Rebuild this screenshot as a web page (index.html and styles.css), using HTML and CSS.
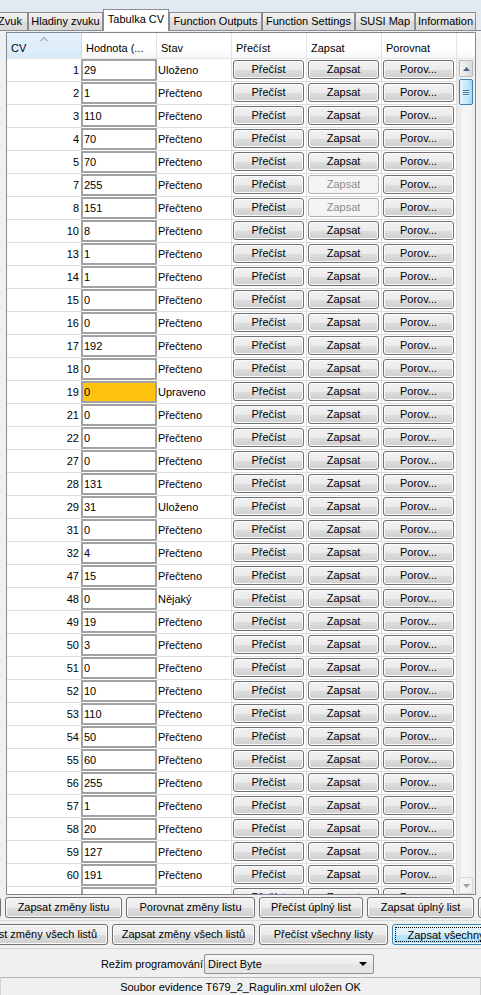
FILE: index.html
```html
<!DOCTYPE html>
<html lang="cs">
<head>
<meta charset="utf-8">
<title>Tabulka CV</title>
<link rel="stylesheet" href="styles.css">
</head>
<body>
<div class="tabbar">
  <div class="tab w-zvuk">Zvuk</div>
  <div class="tab w-hlad">Hladiny zvuku</div>
  <div class="tab sel w-tab">Tabulka CV</div>
  <div class="tab w-fo">Function Outputs</div>
  <div class="tab w-fs">Function Settings</div>
  <div class="tab w-susi">SUSI Map</div>
  <div class="tab w-info">Information</div>
</div>
<div class="pane">
  <div class="view">
    <div class="head">
      <div class="h sorted">CV<svg class="caret" width="8" height="6" viewBox="0 0 8 6"><polyline points="0.5,5 4,1.5 7.5,5" fill="none" stroke="#9aa9bd" stroke-width="1.2"/></svg></div>
      <div class="h">Hodnota (...</div>
      <div class="h">Stav</div>
      <div class="h">Přečíst</div>
      <div class="h">Zapsat</div>
      <div class="h">Porovnat</div>
      <div class="h hfill"></div>
    </div>
    <div class="bodywrap">
      <div class="rows">
        <div class="row"><div class="c cv">1</div><div class="c val">29</div><div class="c st">Uloženo</div><div class="c b"><span class="btn">Přečíst</span></div><div class="c b"><span class="btn">Zapsat</span></div><div class="c b"><span class="btn">Porov...</span></div></div>
        <div class="row"><div class="c cv">2</div><div class="c val">1</div><div class="c st">Přečteno</div><div class="c b"><span class="btn">Přečíst</span></div><div class="c b"><span class="btn">Zapsat</span></div><div class="c b"><span class="btn">Porov...</span></div></div>
        <div class="row"><div class="c cv">3</div><div class="c val">110</div><div class="c st">Přečteno</div><div class="c b"><span class="btn">Přečíst</span></div><div class="c b"><span class="btn">Zapsat</span></div><div class="c b"><span class="btn">Porov...</span></div></div>
        <div class="row"><div class="c cv">4</div><div class="c val">70</div><div class="c st">Přečteno</div><div class="c b"><span class="btn">Přečíst</span></div><div class="c b"><span class="btn">Zapsat</span></div><div class="c b"><span class="btn">Porov...</span></div></div>
        <div class="row"><div class="c cv">5</div><div class="c val">70</div><div class="c st">Přečteno</div><div class="c b"><span class="btn">Přečíst</span></div><div class="c b"><span class="btn">Zapsat</span></div><div class="c b"><span class="btn">Porov...</span></div></div>
        <div class="row"><div class="c cv">7</div><div class="c val">255</div><div class="c st">Přečteno</div><div class="c b"><span class="btn">Přečíst</span></div><div class="c b"><span class="btn dis">Zapsat</span></div><div class="c b"><span class="btn">Porov...</span></div></div>
        <div class="row"><div class="c cv">8</div><div class="c val">151</div><div class="c st">Přečteno</div><div class="c b"><span class="btn">Přečíst</span></div><div class="c b"><span class="btn dis">Zapsat</span></div><div class="c b"><span class="btn">Porov...</span></div></div>
        <div class="row"><div class="c cv">10</div><div class="c val">8</div><div class="c st">Přečteno</div><div class="c b"><span class="btn">Přečíst</span></div><div class="c b"><span class="btn">Zapsat</span></div><div class="c b"><span class="btn">Porov...</span></div></div>
        <div class="row"><div class="c cv">13</div><div class="c val">1</div><div class="c st">Přečteno</div><div class="c b"><span class="btn">Přečíst</span></div><div class="c b"><span class="btn">Zapsat</span></div><div class="c b"><span class="btn">Porov...</span></div></div>
        <div class="row"><div class="c cv">14</div><div class="c val">1</div><div class="c st">Přečteno</div><div class="c b"><span class="btn">Přečíst</span></div><div class="c b"><span class="btn">Zapsat</span></div><div class="c b"><span class="btn">Porov...</span></div></div>
        <div class="row"><div class="c cv">15</div><div class="c val">0</div><div class="c st">Přečteno</div><div class="c b"><span class="btn">Přečíst</span></div><div class="c b"><span class="btn">Zapsat</span></div><div class="c b"><span class="btn">Porov...</span></div></div>
        <div class="row"><div class="c cv">16</div><div class="c val">0</div><div class="c st">Přečteno</div><div class="c b"><span class="btn">Přečíst</span></div><div class="c b"><span class="btn">Zapsat</span></div><div class="c b"><span class="btn">Porov...</span></div></div>
        <div class="row"><div class="c cv">17</div><div class="c val">192</div><div class="c st">Přečteno</div><div class="c b"><span class="btn">Přečíst</span></div><div class="c b"><span class="btn">Zapsat</span></div><div class="c b"><span class="btn">Porov...</span></div></div>
        <div class="row"><div class="c cv">18</div><div class="c val">0</div><div class="c st">Přečteno</div><div class="c b"><span class="btn">Přečíst</span></div><div class="c b"><span class="btn">Zapsat</span></div><div class="c b"><span class="btn">Porov...</span></div></div>
        <div class="row"><div class="c cv">19</div><div class="c val mod">0</div><div class="c st">Upraveno</div><div class="c b"><span class="btn">Přečíst</span></div><div class="c b"><span class="btn">Zapsat</span></div><div class="c b"><span class="btn">Porov...</span></div></div>
        <div class="row"><div class="c cv">21</div><div class="c val">0</div><div class="c st">Přečteno</div><div class="c b"><span class="btn">Přečíst</span></div><div class="c b"><span class="btn">Zapsat</span></div><div class="c b"><span class="btn">Porov...</span></div></div>
        <div class="row"><div class="c cv">22</div><div class="c val">0</div><div class="c st">Přečteno</div><div class="c b"><span class="btn">Přečíst</span></div><div class="c b"><span class="btn">Zapsat</span></div><div class="c b"><span class="btn">Porov...</span></div></div>
        <div class="row"><div class="c cv">27</div><div class="c val">0</div><div class="c st">Přečteno</div><div class="c b"><span class="btn">Přečíst</span></div><div class="c b"><span class="btn">Zapsat</span></div><div class="c b"><span class="btn">Porov...</span></div></div>
        <div class="row"><div class="c cv">28</div><div class="c val">131</div><div class="c st">Přečteno</div><div class="c b"><span class="btn">Přečíst</span></div><div class="c b"><span class="btn">Zapsat</span></div><div class="c b"><span class="btn">Porov...</span></div></div>
        <div class="row"><div class="c cv">29</div><div class="c val">31</div><div class="c st">Uloženo</div><div class="c b"><span class="btn">Přečíst</span></div><div class="c b"><span class="btn">Zapsat</span></div><div class="c b"><span class="btn">Porov...</span></div></div>
        <div class="row"><div class="c cv">31</div><div class="c val">0</div><div class="c st">Přečteno</div><div class="c b"><span class="btn">Přečíst</span></div><div class="c b"><span class="btn">Zapsat</span></div><div class="c b"><span class="btn">Porov...</span></div></div>
        <div class="row"><div class="c cv">32</div><div class="c val">4</div><div class="c st">Přečteno</div><div class="c b"><span class="btn">Přečíst</span></div><div class="c b"><span class="btn">Zapsat</span></div><div class="c b"><span class="btn">Porov...</span></div></div>
        <div class="row"><div class="c cv">47</div><div class="c val">15</div><div class="c st">Přečteno</div><div class="c b"><span class="btn">Přečíst</span></div><div class="c b"><span class="btn">Zapsat</span></div><div class="c b"><span class="btn">Porov...</span></div></div>
        <div class="row"><div class="c cv">48</div><div class="c val">0</div><div class="c st">Nějaký</div><div class="c b"><span class="btn">Přečíst</span></div><div class="c b"><span class="btn">Zapsat</span></div><div class="c b"><span class="btn">Porov...</span></div></div>
        <div class="row"><div class="c cv">49</div><div class="c val">19</div><div class="c st">Přečteno</div><div class="c b"><span class="btn">Přečíst</span></div><div class="c b"><span class="btn">Zapsat</span></div><div class="c b"><span class="btn">Porov...</span></div></div>
        <div class="row"><div class="c cv">50</div><div class="c val">3</div><div class="c st">Přečteno</div><div class="c b"><span class="btn">Přečíst</span></div><div class="c b"><span class="btn">Zapsat</span></div><div class="c b"><span class="btn">Porov...</span></div></div>
        <div class="row"><div class="c cv">51</div><div class="c val">0</div><div class="c st">Přečteno</div><div class="c b"><span class="btn">Přečíst</span></div><div class="c b"><span class="btn">Zapsat</span></div><div class="c b"><span class="btn">Porov...</span></div></div>
        <div class="row"><div class="c cv">52</div><div class="c val">10</div><div class="c st">Přečteno</div><div class="c b"><span class="btn">Přečíst</span></div><div class="c b"><span class="btn">Zapsat</span></div><div class="c b"><span class="btn">Porov...</span></div></div>
        <div class="row"><div class="c cv">53</div><div class="c val">110</div><div class="c st">Přečteno</div><div class="c b"><span class="btn">Přečíst</span></div><div class="c b"><span class="btn">Zapsat</span></div><div class="c b"><span class="btn">Porov...</span></div></div>
        <div class="row"><div class="c cv">54</div><div class="c val">50</div><div class="c st">Přečteno</div><div class="c b"><span class="btn">Přečíst</span></div><div class="c b"><span class="btn">Zapsat</span></div><div class="c b"><span class="btn">Porov...</span></div></div>
        <div class="row"><div class="c cv">55</div><div class="c val">60</div><div class="c st">Přečteno</div><div class="c b"><span class="btn">Přečíst</span></div><div class="c b"><span class="btn">Zapsat</span></div><div class="c b"><span class="btn">Porov...</span></div></div>
        <div class="row"><div class="c cv">56</div><div class="c val">255</div><div class="c st">Přečteno</div><div class="c b"><span class="btn">Přečíst</span></div><div class="c b"><span class="btn">Zapsat</span></div><div class="c b"><span class="btn">Porov...</span></div></div>
        <div class="row"><div class="c cv">57</div><div class="c val">1</div><div class="c st">Přečteno</div><div class="c b"><span class="btn">Přečíst</span></div><div class="c b"><span class="btn">Zapsat</span></div><div class="c b"><span class="btn">Porov...</span></div></div>
        <div class="row"><div class="c cv">58</div><div class="c val">20</div><div class="c st">Přečteno</div><div class="c b"><span class="btn">Přečíst</span></div><div class="c b"><span class="btn">Zapsat</span></div><div class="c b"><span class="btn">Porov...</span></div></div>
        <div class="row"><div class="c cv">59</div><div class="c val">127</div><div class="c st">Přečteno</div><div class="c b"><span class="btn">Přečíst</span></div><div class="c b"><span class="btn">Zapsat</span></div><div class="c b"><span class="btn">Porov...</span></div></div>
        <div class="row"><div class="c cv">60</div><div class="c val">191</div><div class="c st">Přečteno</div><div class="c b"><span class="btn">Přečíst</span></div><div class="c b"><span class="btn">Zapsat</span></div><div class="c b"><span class="btn">Porov...</span></div></div>
        <div class="row"><div class="c cv">61</div><div class="c val">0</div><div class="c st">Uloženo</div><div class="c b"><span class="btn">Přečíst</span></div><div class="c b"><span class="btn">Zapsat</span></div><div class="c b"><span class="btn">Porov...</span></div></div>
      </div>
      <div class="sbar">
        <div class="sbtn up"><svg width="7" height="4" viewBox="0 0 7 4"><polygon points="0,4 3.5,0 7,4" fill="#4d6185"/></svg></div>
        <div class="thumb"><span class="grip"></span><span class="grip"></span><span class="grip"></span></div>
        <div class="track"></div>
        <div class="sbtn down"><svg width="7" height="4" viewBox="0 0 7 4"><polygon points="0,0 7,0 3.5,4" fill="#9aa1ab"/></svg></div>
      </div>
    </div>
  </div>
</div>
<div class="bottom">
  <div class="brow r1">
    <span class="pb w118">Přečíst změny listu</span>
    <span class="pb w117">Zapsat změny listu</span>
    <span class="pb w129">Porovnat změny listu</span>
    <span class="pb w104">Přečíst úplný list</span>
    <span class="pb w107">Zapsat úplný list</span>
    <span class="pb w110">Porovnat úplný list</span>
  </div>
  <div class="brow r2">
    <span class="pb w146">Přečíst změny všech listů</span>
    <span class="pb w143">Zapsat změny všech listů</span>
    <span class="pb w129">Přečíst všechny listy</span>
    <span class="pb w130 focus"><span class="frect">Zapsat všechny listy</span></span>
  </div>
  <div class="moderow">
    <span class="mlabel">Režim programování</span>
    <span class="combo"><span class="ctext">Direct Byte</span><svg width="8" height="4" viewBox="0 0 8 4"><polygon points="0,0 8,0 4,4" fill="#000"/></svg></span>
  </div>
  <div class="status">Soubor evidence T679_2_Ragulin.xml uložen OK</div>
</div>
</body>
</html>
```

FILE: styles.css
```css
html, body {
  margin: 0;
  padding: 0;
}
body {
  width: 481px;
  height: 995px;
  overflow: hidden;
  background: #f0f0f0;
  font-family: "Liberation Sans", Arial, sans-serif;
  font-size: 11px;
  color: #000;
}

/* ---------- tabs ---------- */
.tabbar {
  height: 30px;
  display: flex;
  align-items: flex-end;
  background: #e3e9f1;
  border-bottom: 1px solid #898c95;
  margin-left: -8px;
}
.tab {
  box-sizing: border-box;
  height: 18px;
  border: 1px solid #898c95;
  border-bottom: none;
  background: linear-gradient(#f3f3f3, #e6e6e6 50%, #dcdcdc 51%, #d9d9d9);
  text-align: center;
  line-height: 17px;
  white-space: nowrap;
  overflow: hidden;
}
.tab.sel {
  height: 22px;
  margin-bottom: -1px;
  background: #fff;
  line-height: 19px;
  position: relative;
}
.w-zvuk { width: 36px; }
.w-hlad { width: 75px; }
.w-tab { width: 66px; }
.w-fo { width: 93px; }
.w-fs { width: 93px; }
.w-susi { width: 60px; }
.w-info { width: 61px; }

/* ---------- table view ---------- */
.pane {
  padding: 1px 0 0 6px;
}
.view {
  width: 470px;
  box-sizing: border-box;
  border: 1px solid #828790;
  background: #fff;
}
.head {
  display: flex;
  height: 26px;
  box-sizing: border-box;
  border-bottom: 1px solid #e5e5e5;
  background: linear-gradient(#ffffff, #ffffff 60%, #f6f7f9);
}
.h {
  width: 75px;
  box-sizing: border-box;
  border-right: 1px solid #e3e4e6;
  padding: 7px 0 0 4px;
  line-height: 16px;
  white-space: nowrap;
  position: relative;
}
.h.sorted {
  background: linear-gradient(#e4f1fb, #d9ebf8);
  border-right-color: #c5dcec;
}
.h.hfill {
  flex: 1;
  border-right: none;
}
.caret {
  position: absolute;
  left: 33px;
  top: 3px;
}
.bodywrap {
  display: flex;
  height: 835px;
  overflow: hidden;
}
.rows {
  width: 450px;
}
.row {
  display: grid;
  grid-template-columns: repeat(6, 75px);
  height: 23px;
}
.c {
  box-sizing: border-box;
  height: 23px;
  border-right: 1px solid #dcdcdc;
  border-bottom: 1px solid #dcdcdc;
  line-height: 22px;
  white-space: nowrap;
  overflow: hidden;
}
.c.cv {
  text-align: right;
  padding-right: 2px;
}
.c.val {
  height: 22px;
  margin-left: -1px;
  width: 76px;
  border: 2px solid #a2a2a2;
  padding-left: 1px;
  line-height: 18px;
  background: #fff;
}
.c.val.mod {
  background: #ffc20e;
}
.c.st {
  padding-left: 1px;
}
.c.b {
  border-right: 1px solid #dcdcdc;
}
.btn {
  display: block;
  box-sizing: border-box;
  height: 19px;
  margin: 1px 2px 0 1px;
  border: 1px solid #707070;
  border-radius: 3px;
  background: linear-gradient(#f2f2f2, #ebebeb 50%, #dddddd 51%, #cfcfcf);
  box-shadow: inset 0 0 0 1px #fbfbfb;
  text-align: center;
  line-height: 17px;
}
.btn.dis {
  border-color: #adb2b5;
  background: #f4f4f4;
  box-shadow: none;
  color: #8d8d8d;
}

/* ---------- scrollbar ---------- */
.sbar {
  width: 18px;
  display: flex;
  flex-direction: column;
  background: linear-gradient(90deg, #e6e6e6, #f5f5f5 30%, #f5f5f5 70%, #eaeaea);
  border-left: 1px solid #ececec;
  box-sizing: border-box;
  padding: 1px 2px 0 1px;
}
.sbtn {
  height: 17px;
  box-sizing: border-box;
  border: 1px solid #b6b9bf;
  border-radius: 2px;
  background: linear-gradient(90deg, #f3f3f3, #e8e8e8 50%, #d9d9d9);
  display: flex;
  align-items: center;
  justify-content: center;
}
.sbtn.down {
  border-color: #d4d6d9;
  background: linear-gradient(90deg, #f7f7f7, #efefef);
  margin-bottom: 0;
}
.thumb {
  height: 26px;
  margin-top: 2px;
  box-sizing: border-box;
  border: 1px solid #3c7fb1;
  border-radius: 2px;
  background: linear-gradient(90deg, #e3f3fc, #cae8f8 50%, #a9d9f3);
  display: flex;
  flex-direction: column;
  align-items: center;
  justify-content: center;
  gap: 1px;
}
.grip {
  display: block;
  width: 6px;
  height: 1px;
  background: #3d6fa0;
  box-shadow: 0 1px 0 #eaf6fd;
}
.track {
  flex: 1;
}

/* ---------- bottom ---------- */
.bottom {
  overflow: hidden;
}
.brow {
  display: flex;
  gap: 4px;
  white-space: nowrap;
}
.brow.r1 {
  margin-top: 2px;
  margin-left: -117px;
  padding-bottom: 2px;
  border-bottom: 1px solid #dadada;
}
.brow.r2 {
  margin-top: 3px;
  margin-left: -38px;
  padding-bottom: 3px;
  border-bottom: 1px solid #d5d5d5;
}
.pb {
  flex: none;
  box-sizing: border-box;
  height: 21px;
  border: 1px solid #707070;
  border-radius: 3px;
  background: linear-gradient(#f2f2f2, #ebebeb 50%, #dddddd 51%, #cfcfcf);
  box-shadow: inset 0 0 0 1px #fbfbfb;
  text-align: center;
  line-height: 19px;
  overflow: hidden;
}
.pb.focus {
  border-color: #3c7fb1;
  background: linear-gradient(#eaf6fd, #d9f0fc 50%, #bee6fd 51%, #a7d9f5);
  box-shadow: inset 0 0 0 1px #f2fafe;
  padding: 2px;
}
.frect {
  display: block;
  height: 15px;
  line-height: 14px;
  border: 1px dotted #000;
  box-sizing: border-box;
}
.w104 { width: 104px; }
.w107 { width: 107px; }
.w110 { width: 110px; }
.w117 { width: 117px; }
.w118 { width: 118px; }
.w129 { width: 129px; }
.w130 { width: 130px; }
.w143 { width: 143px; }
.w146 { width: 146px; }

.moderow {
  display: grid;
  grid-template-columns: 203px 171px;
  align-items: center;
  margin-top: 5px;
  height: 20px;
}
.mlabel {
  text-align: right;
  white-space: nowrap;
}
.combo {
  margin-left: 1px;
  height: 20px;
  box-sizing: border-box;
  border: 1px solid #8e8f8f;
  border-radius: 2px;
  background: linear-gradient(#f7f7f7, #ededed 50%, #e3e3e3 51%, #e6e6e6);
  display: flex;
  align-items: center;
  justify-content: space-between;
  padding: 0 6px 0 3px;
}
.status {
  margin-top: 3px;
  height: 20px;
  box-sizing: border-box;
  border-top: 1px solid #b8b8b8;
  border-left: 1px solid #d0d0d0;
  border-right: 1px solid #d0d0d0;
  text-align: center;
  line-height: 18px;
  white-space: nowrap;
}
```
